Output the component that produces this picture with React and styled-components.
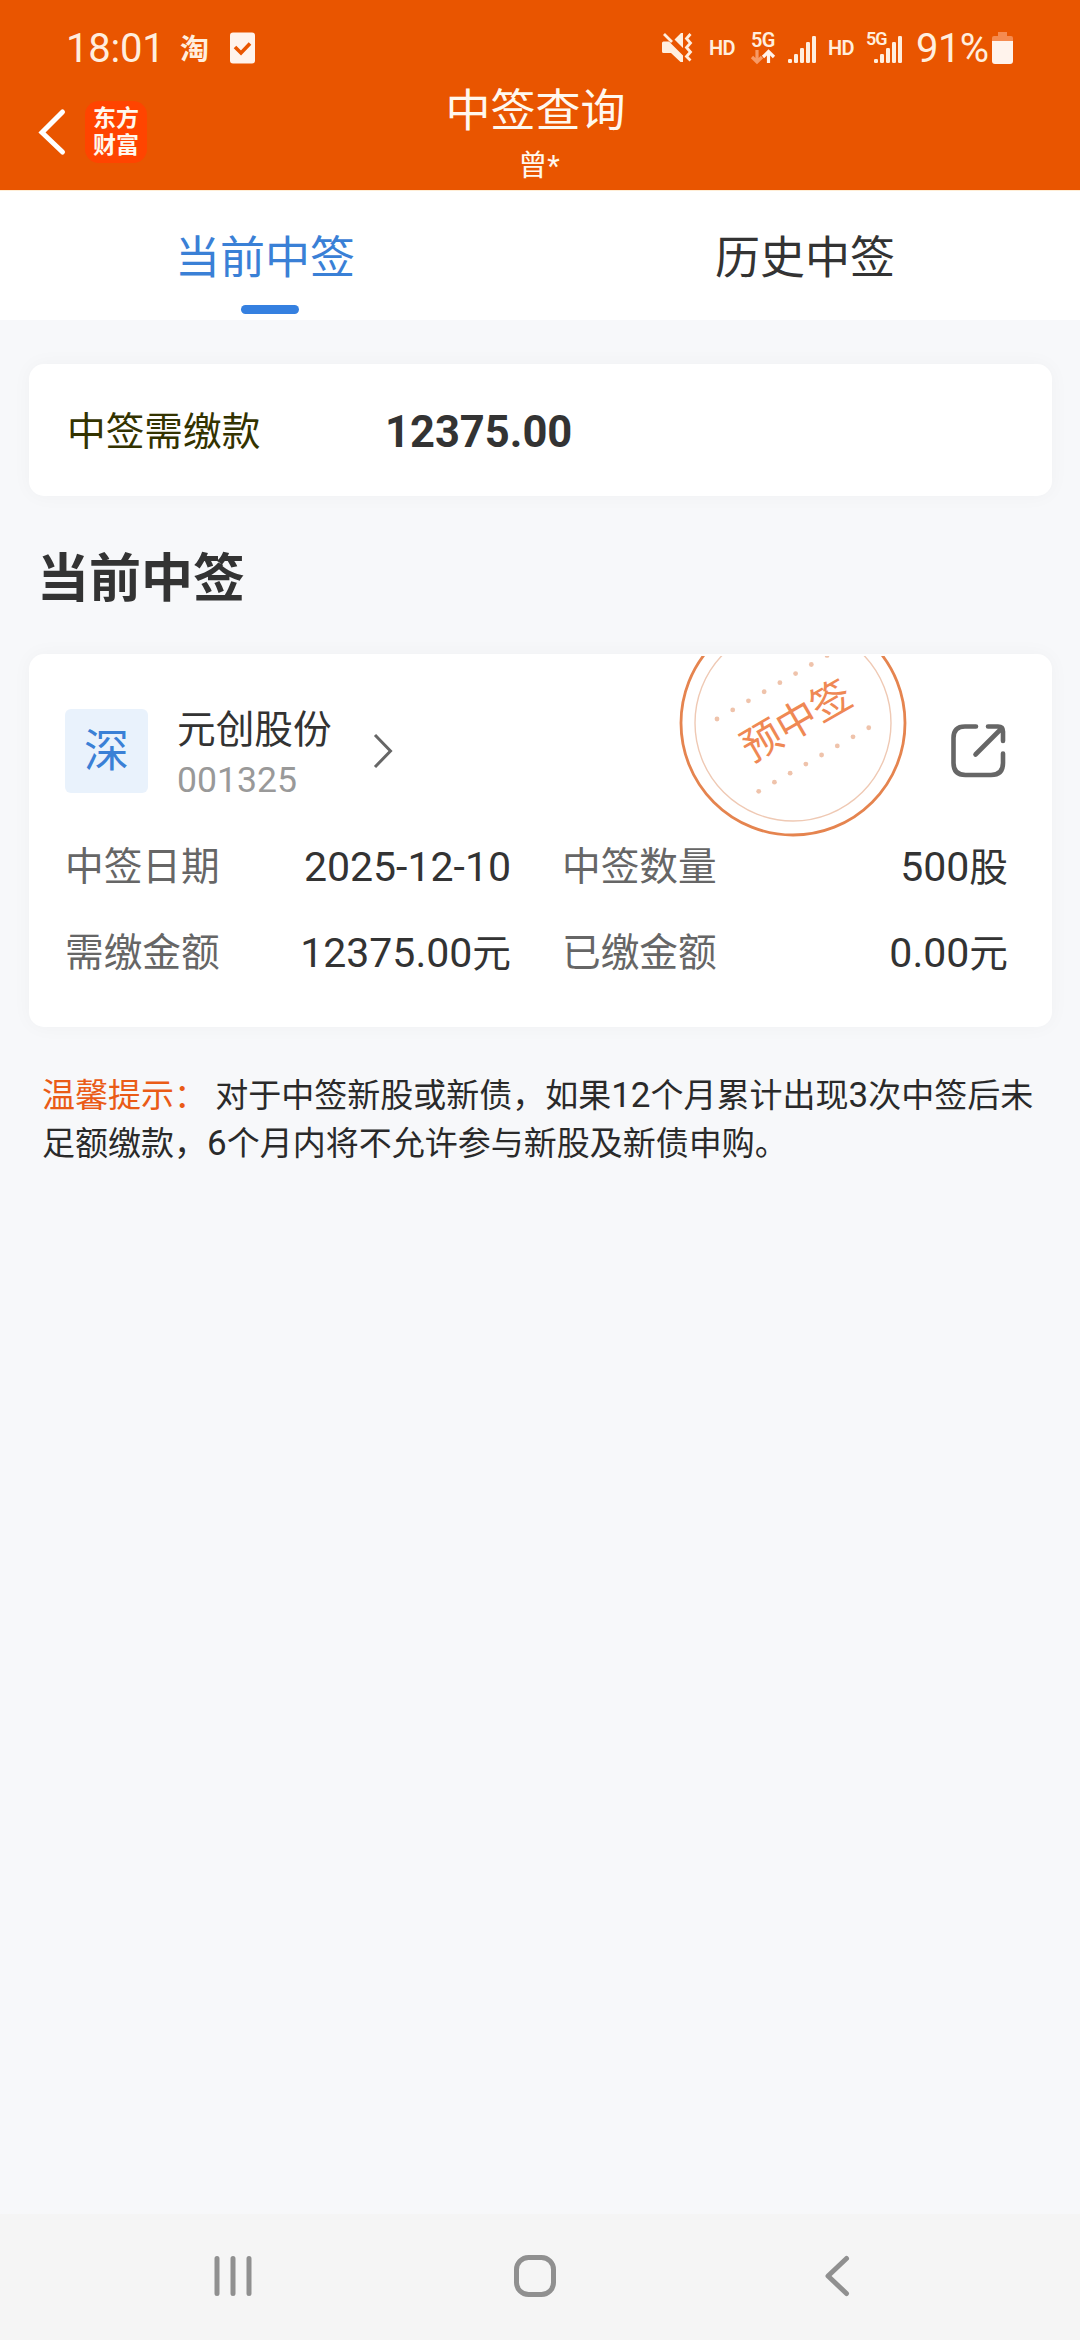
import React from 'react';
import styled, { createGlobalStyle } from 'styled-components';

const GlobalStyle = createGlobalStyle`
  * {
    box-sizing: border-box;
  }

  body {
    margin: 0;
    background: #f7f8fa;
    font-family: Roboto, 'Noto Sans CJK SC', sans-serif;
    color: #333;
  }
`;

const Page = styled.div`
  width: 1080px;
  height: 2340px;
  display: flex;
  flex-direction: column;
  overflow: hidden;
`;

const Header = styled.header`
  height: 190px;
  background: #e95500;
  color: #fff8ee;
`;

const StatusBar = styled.div`
  height: 80px;
  padding: 15px 67px 0 66px;
  display: flex;
  justify-content: space-between;
  color: #ffeede;

  svg {
    display: block;
  }
`;

const StatusGroup = styled.div`
  height: 66px;
  display: flex;
  align-items: center;
`;

const Clock = styled.span`
  width: 114px;
  font-size: 40px;
  letter-spacing: -0.2px;
`;

const TaoMark = styled.span`
  width: 50px;
  padding-bottom: 3px;
  font-size: 29px;
  font-weight: 700;
`;

const Hd = styled.span`
  width: 27px;
  margin-right: ${(props) => props.$gap}px;
  font-size: 20px;
  font-weight: 600;
  letter-spacing: -0.6px;
`;

const StatusIcon = styled.svg`
  margin-right: ${(props) => props.$gap || 0}px;
  overflow: visible;
  fill: #ffeede;
  font-weight: 600;
`;

const Percent = styled.span`
  width: 76px;
  font-size: 40px;
  letter-spacing: -0.6px;
`;

const TitleBar = styled.div`
  height: 110px;
  display: grid;
  grid-template-columns: 1fr auto 1fr;
`;

const TitleLeft = styled.div`
  height: 103px;
  padding-left: 36px;
  display: flex;
  align-items: center;
  gap: 17px;
`;

const Logo = styled.div`
  width: 62px;
  height: 62px;
  padding-top: 4px;
  border-radius: 14px;
  background: #ff4400;
  font-size: 23px;
  font-weight: 700;
  line-height: 27px;
  text-align: center;
`;

const TitleText = styled.div`
  display: flex;
  flex-direction: column;
  align-items: center;
`;

const Title = styled.h1`
  margin: 0;
  padding-right: 9px;
  font-size: 45px;
  font-weight: 400;
  line-height: 63px;
`;

const Account = styled.div`
  padding-right: 2px;
  font-size: 29px;
  line-height: 46px;
`;

const Tabs = styled.nav`
  height: 130px;
  display: flex;
  background: #fff;
  border-top: 1px solid #ffeed6;
`;

const Tab = styled.div`
  flex: 1;
  display: flex;
  flex-direction: column;
  align-items: center;
  color: ${(props) => (props.$active ? '#3a80d6' : '#333')};
  font-size: 45px;
  line-height: 60px;

  span {
    padding: 38px 10px 0 0;
  }

  &::after {
    content: '';
    width: 58px;
    height: 9px;
    margin-top: 16px;
    border-radius: 5px;
    background: ${(props) => (props.$active ? '#3580e0' : 'transparent')};
  }
`;

const Content = styled.main`
  flex: 1;
  padding: 44px 28px 0 29px;
`;

const Card = styled.section`
  background: #fff;
  border-radius: 15px;
  box-shadow: 0 0 20px rgba(0, 0, 0, 0.035);
`;

const PayCard = styled(Card)`
  height: 132px;
  padding-left: 38px;
  display: flex;
  align-items: center;
`;

const PayLabel = styled.div`
  width: 318px;
  padding-bottom: 5px;
  color: #333300;
  font-size: 38.7px;
`;

const PayAmount = styled.div`
  padding-top: 4px;
  font-size: 43.5px;
  font-weight: 700;
`;

const SectionTitle = styled.h2`
  margin: 0;
  padding: 51px 0 41px 8px;
  font-size: 52px;
  font-weight: 700;
  line-height: 66px;
`;

const StockCard = styled(Card)`
  position: relative;
  height: 373px;
  padding: 55px 46px 0 36px;
`;

const StockHead = styled.div`
  height: 84px;
  display: flex;
  align-items: center;
`;

const Market = styled.div`
  width: 83px;
  height: 84px;
  border-radius: 6px;
  background: #e9f2fc;
  color: #3a80d6;
  font-size: 45px;
  line-height: 86px;
  text-align: center;
`;

const StockName = styled.div`
  width: 196px;
  margin-left: 29px;
  padding-top: 7px;
  font-size: 38.7px;
  line-height: 50px;
`;

const StockCode = styled.div`
  color: #999;
  font-size: 35.6px;
  line-height: 50px;
`;

const ShareButton = styled.svg`
  margin-left: auto;
  fill: none;
  stroke: #666;
  stroke-width: 4.6;
  stroke-linecap: round;
`;

const Stamp = styled.svg`
  position: absolute;
  top: 2px;
  left: 648px;
  font-size: 40px;
`;

const Details = styled.dl`
  margin: 31px 0 0;
  display: grid;
  grid-template-columns: 446px 446px;
  column-gap: 51px;
  grid-auto-rows: 86px;
`;

const Detail = styled.div`
  display: flex;
  justify-content: space-between;
  font-size: 38.7px;
  line-height: 86px;

  dt {
    color: #666;
  }

  dd {
    margin: 0;
  }
`;

// Digits run slightly larger than the Chinese glyphs beside them
const Num = styled.span`
  font-size: 1.06em;
`;

const Tips = styled.p`
  margin: 45px 0 0;
  padding: 0 6px 0 13px;
  color: #2a2a2a;
  font-size: 33px;
  line-height: 48px;
  white-space: nowrap;
`;

const TipsLabel = styled.span`
  color: #ea5b17;
`;

const NavBar = styled.footer`
  height: 126px;
  padding: 0 230px 3px 213px;
  display: flex;
  align-items: center;

  background: #f5f5f5;

  svg {
    fill: none;
    stroke: #909090;
    stroke-width: 5;
    stroke-linecap: round;
    stroke-linejoin: round;
  }

  svg:nth-child(2) {
    margin: 0 268px 0 260px;
  }
`;

const details = [
  { label: '中签日期', value: '2025-12-10', unit: '' },
  { label: '中签数量', value: '500', unit: '股' },
  { label: '需缴金额', value: '12375.00', unit: '元' },
  { label: '已缴金额', value: '0.00', unit: '元' },
];

const signalBars = [
  { x: 0, h: 4 },
  { x: 6, h: 9 },
  { x: 12, h: 15 },
  { x: 18, h: 21 },
  { x: 24, h: 27 },
];

const dots = [0, 1, 2, 3, 4, 5, 6, 7];

function Bars({ x = 0, y = 0 }) {
  return (
    <g transform={`translate(${x} ${y})`}>
      {signalBars.map((bar) => (
        <rect key={bar.x} x={bar.x} y={27 - bar.h} width="4" height={bar.h} rx="1.2" />
      ))}
    </g>
  );
}

function TopStatus() {
  return (
    <StatusBar>
      <StatusGroup>
        <Clock>18:01</Clock>
        <TaoMark>淘</TaoMark>
        <StatusIcon width="25" height="32">
          <rect y="0.5" width="25" height="31" rx="3" fill="#fff3ec" />
          <path d="M5 15l6 6 9-9.500" fill="none" stroke="#e95500" strokeWidth="3.600" />
        </StatusIcon>
      </StatusGroup>
      <StatusGroup>
        <StatusIcon width="30" height="32" $gap={17}>
          <path d="M0 11q0-1.500 1.500-1.500H7L21 23.500V30h-2.500L9 21H1.500Q0 21 0 19.500zM12.500 7.500L19 1h2v15z" />
          <path
            d="M2 2l8 8M28.500 2l-4 4.500 4 4.500-4 4.500 4 4.500-4 4.500 4 4"
            fill="none"
            stroke="#ffeede"
            strokeWidth="2.800"
          />
        </StatusIcon>
        <Hd $gap={15}>HD</Hd>
        <StatusIcon width="26" height="34" $gap={11}>
          <text x="0" y="16" fontSize="20" letterSpacing="-0.800">5G</text>
          <path
            d="M6 19v11M1 26l5 5 5-5"
            fill="none"
            stroke="#f79a66"
            strokeWidth="3.200"
          />
          <path d="M17.500 32V21M12 26l5.500-5.500L23 26" fill="none" stroke="#fff3ec" strokeWidth="3.200" />
        </StatusIcon>
        <StatusIcon width="28" height="32" $gap={12}>
          <Bars y={4} />
        </StatusIcon>
        <Hd $gap={11}>HD</Hd>
        <StatusIcon width="36" height="32" $gap={14}>
          <text x="0" y="13" fontSize="18" letterSpacing="-1">5G</text>
          <Bars x={8} y={4} />
        </StatusIcon>
        <Percent>91%</Percent>
        <StatusIcon width="21" height="33">
          <path d="M6 0h9v4h4q2 0 2 2v4H0V6q0-2 2-2h4z" fill="#f58b50" />
          <path d="M0 9h21v20q0 3-3 3H3q-3 0-3-3z" fill="#fff3ec" />
        </StatusIcon>
      </StatusGroup>
    </StatusBar>
  );
}

function StampMark() {
  return (
    <Stamp width="232" height="184">
      <circle cx="116" cy="67" r="112" fill="none" stroke="#e5844f" strokeWidth="2.800" />
      <circle cx="116" cy="67" r="98" fill="none" stroke="#efc9b4" strokeWidth="1.400" />
      {dots.map((n) => (
        <g key={n} fill="#efc3ab">
          <circle cx={40 + n * 15.72} cy={63 - n * 9.08} r="2.400" />
          <circle cx={81.7 + n * 15.72} cy={135.3 - n * 9.08} r="2.400" />
        </g>
      ))}
      <text
        transform="translate(119 64) rotate(-30)"
        x="0"
        y="15"
        textAnchor="middle"
        fill="#ef8854"
      >
        预中签
      </text>
    </Stamp>
  );
}

function App() {
  return (
    <Page>
      <GlobalStyle />
      <Header>
        <TopStatus />
        <TitleBar>
          <TitleLeft>
            <svg width="32" height="48" fill="none" stroke="#fff" strokeWidth="5">
              <path d="M26.500 4L6 24.500 26.500 44" strokeLinecap="round" />
            </svg>
            <Logo>
              东方
              <br />
              财富
            </Logo>
          </TitleLeft>
          <TitleText>
            <Title>中签查询</Title>
            <Account>曾*</Account>
          </TitleText>
        </TitleBar>
      </Header>
      <Tabs>
        <Tab $active>
          <span>当前中签</span>
        </Tab>
        <Tab>
          <span>历史中签</span>
        </Tab>
      </Tabs>
      <Content>
        <PayCard>
          <PayLabel>中签需缴款</PayLabel>
          <PayAmount>12375.00</PayAmount>
        </PayCard>
        <SectionTitle>当前中签</SectionTitle>
        <StockCard>
          <StampMark />
          <StockHead>
            <Market>深</Market>
            <StockName>
              元创股份
              <StockCode>001325</StockCode>
            </StockName>
            <svg width="20" height="36" fill="none" stroke="#666" strokeWidth="3">
              <path d="M2 2l15.500 16L2 34" />
            </svg>
            <ShareButton width="56" height="56">
              <path d="M26 3.500H15Q3.500 3.500 3.500 15v25q0 12 12 12H41q12 0 12-12V30.500" />
              <path d="M38 3.500h10q5 0 5 5V18M51 6L25.500 31.500" />
            </ShareButton>
          </StockHead>
          <Details>
            {details.map((item) => (
              <Detail key={item.label}>
                <dt>{item.label}</dt>
                <dd>
                  <Num>{item.value}</Num>
                  {item.unit}
                </dd>
              </Detail>
            ))}
          </Details>
        </StockCard>
        <Tips>
          <TipsLabel>温馨提示：</TipsLabel> 对于中签新股或新债，如果<Num>12</Num>个月累计出现<Num>3</Num>次中签后未
          <br />
          足额缴款，<Num>6</Num>个月内将不允许参与新股及新债申购。
        </Tips>
      </Content>
      <NavBar>
        <svg width="40" height="44">
          <path d="M4 4.500v35M20 4.500v35M36 4.500v35" />
        </svg>
        <svg width="44" height="44">
          <rect x="3.500" y="3.500" width="37" height="37" rx="12" />
        </svg>
        <svg width="26" height="44">
          <path d="M22.500 4.500L4 22l18.500 17.500" />
        </svg>
      </NavBar>
    </Page>
  );
}

export default App;
